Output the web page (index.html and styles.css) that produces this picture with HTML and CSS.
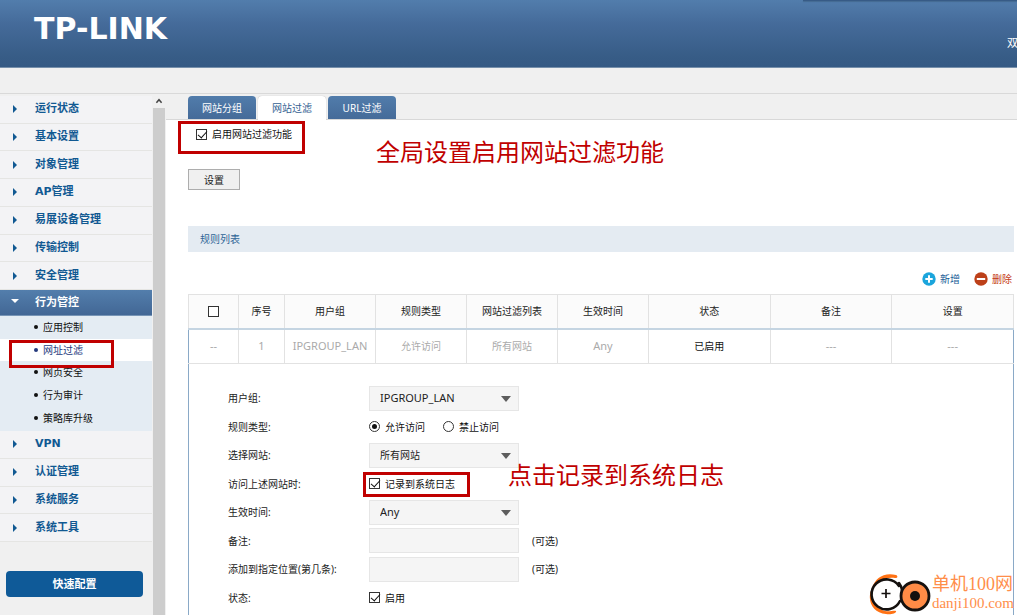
FILE: index.html
```html
<!DOCTYPE html>
<html lang="zh-CN">
<head>
<meta charset="utf-8">
<title>TP-LINK</title>
<link rel="stylesheet" href="styles.css">
</head>
<body>
<header class="header">
  <div class="logo">TP-LINK</div>
  <div class="model">双</div>
  <div class="header-flyout"></div>
</header>
<div class="strip"></div>
<div class="layout">
  <aside class="sidebar">
    <nav class="nav">
      <div class="nav-group nav-group-top">
        <a class="nav-item" href="#">运行状态</a>
        <a class="nav-item" href="#">基本设置</a>
        <a class="nav-item" href="#">对象管理</a>
        <a class="nav-item" href="#">AP管理</a>
        <a class="nav-item" href="#">易展设备管理</a>
        <a class="nav-item" href="#">传输控制</a>
        <a class="nav-item" href="#">安全管理</a>
      </div>
      <a class="nav-item nav-item-open" href="#">行为管控</a>
      <div class="subnav">
        <a class="sub-item" href="#">应用控制</a>
        <a class="sub-item sub-item-current" href="#">网址过滤<span class="mark mark-subnav"></span></a>
        <a class="sub-item" href="#">网页安全</a>
        <a class="sub-item" href="#">行为审计</a>
        <a class="sub-item" href="#">策略库升级</a>
      </div>
      <div class="nav-group nav-group-bottom">
        <a class="nav-item" href="#">VPN</a>
        <a class="nav-item" href="#">认证管理</a>
        <a class="nav-item" href="#">系统服务</a>
        <a class="nav-item" href="#">系统工具</a>
      </div>
    </nav>
    <button class="quick" type="button">快速配置</button>
  </aside>
  <div class="scrollbar">
    <svg class="scroll-up" viewBox="0 0 12 13"><path d="M3.4 8.2 6 5.2l2.6 3" fill="none" stroke="#444" stroke-width="1.5"/></svg>
    <div class="scroll-thumb"></div>
  </div>
  <main class="main">
    <div class="tabs">
      <button class="tab" type="button">网站分组</button>
      <button class="tab tab-active" type="button">网站过滤</button>
      <button class="tab" type="button">URL过滤</button>
    </div>
    <div class="content">
      <div class="enable">
        <label class="option"><input class="check" type="checkbox" checked>启用网站过滤功能</label>
        <span class="mark mark-enable"></span>
        <span class="note note-enable">全局设置启用网站过滤功能</span>
      </div>
      <button class="set-button" type="button">设置</button>
      <h2 class="section-title">规则列表</h2>
      <div class="actions">
        <button class="action action-add" type="button"><svg class="action-icon" viewBox="0 0 14 14"><circle cx="7" cy="7" r="6.7" fill="#1ba5dc"/><path d="M7 3.3v7.4M3.3 7h7.4" stroke="#fff" stroke-width="2"/></svg>新增</button>
        <button class="action action-delete" type="button"><svg class="action-icon" viewBox="0 0 14 14"><circle cx="7" cy="7" r="6.7" fill="#bd4019"/><path d="M2.8 7h8.4" stroke="#fff" stroke-width="2"/></svg>删除</button>
      </div>
      <table class="rules">
        <colgroup><col class="c-check"><col class="c-index"><col class="c-mid"><col class="c-mid"><col class="c-mid"><col class="c-mid"><col class="c-wide"><col class="c-wide"><col class="c-wide"></colgroup>
        <thead>
          <tr><th><input class="check" type="checkbox" aria-label="全选"></th><th>序号</th><th>用户组</th><th>规则类型</th><th>网站过滤列表</th><th>生效时间</th><th>状态</th><th>备注</th><th>设置</th></tr>
        </thead>
        <tbody>
          <tr><td>--</td><td>1</td><td>IPGROUP_LAN</td><td class="cjk">允许访问</td><td class="cjk">所有网站</td><td>Any</td><td class="cjk enabled">已启用</td><td>---</td><td>---</td></tr>
        </tbody>
      </table>
      <form class="editor">
        <div class="field"><label class="label" for="group">用户组:</label><span class="select"><select id="group"><option>IPGROUP_LAN</option></select></span></div>
        <div class="field"><span class="label">规则类型:</span><label class="option"><input class="radio" type="radio" name="type" checked>允许访问</label><label class="option"><input class="radio" type="radio" name="type">禁止访问</label></div>
        <div class="field"><label class="label" for="site">选择网站:</label><span class="select"><select id="site" class="cjk"><option>所有网站</option></select></span></div>
        <div class="field"><span class="label">访问上述网站时:</span><label class="option"><input class="check" type="checkbox" checked>记录到系统日志</label><span class="mark mark-log"></span><span class="note note-log">点击记录到系统日志</span></div>
        <div class="field"><label class="label" for="time">生效时间:</label><span class="select"><select id="time"><option>Any</option></select></span></div>
        <div class="field"><label class="label" for="remark">备注:</label><input class="text" id="remark" type="text"><span class="hint">(可选)</span></div>
        <div class="field"><label class="label" for="order">添加到指定位置(第几条):</label><input class="text" id="order" type="text"><span class="hint">(可选)</span></div>
        <div class="field"><span class="label">状态:</span><label class="option"><input class="check" type="checkbox" checked>启用</label></div>
      </form>
    </div>
  </main>
</div>
<div class="watermark">
  <svg class="watermark-icon" viewBox="0 0 64 44">
    <path d="M4 17C7 7 16 1 28 4c2 1 2 3-1 3C18 6 9 9 5 18c-4 9 1 19 12 22 5 1 9-1 11 0 1 2-5 4-10 3C5 42-2 30 4 17Z" fill="#ff7214"/>
    <path d="M31 15a15 15 0 1 0 1 15" fill="#fff" stroke="#15110f" stroke-width="2.6" stroke-linecap="round"/>
    <path d="M31 12c3 4 4 9 3 15" fill="none" stroke="#15110f" stroke-width="2.6" stroke-linecap="round"/>
    <circle cx="47" cy="25" r="14" fill="#ff8b46" stroke="#15110f" stroke-width="2.8"/>
    <circle cx="47" cy="25" r="5" fill="#15110f"/>
    <path d="M18 18v9M13.500 22.500h9" stroke="#15110f" stroke-width="1.700"/>
  </svg>
  <div class="watermark-text"><div class="watermark-name">单机100网</div><div class="watermark-site">danji100.com</div></div>
</div>
</body>
</html>
```
FILE: styles.css
```css
*, *::before, *::after { box-sizing: border-box; }
body {
  margin: 0;
  height: 100vh;
  display: flex;
  flex-direction: column;
  overflow: hidden;
  position: relative;
  background: #fff;
  color: #222;
  font: 10px/16px "Noto Sans", "Noto Sans CJK SC", sans-serif;
}
button, input, select { font: inherit; color: inherit; margin: 0; }
button { cursor: pointer; }
a { text-decoration: none; }

.header {
  position: relative;
  flex: none;
  height: 68px;
  display: flex;
  justify-content: space-between;
  padding-left: 34px;
  background: linear-gradient(#527dac, #456b9a 35%, #375c86 85%, #355a84);
  border-bottom: 1px solid #7790ab;
  color: #fff;
}
.logo { padding-top: 13px; font: bold 30px/32px "DejaVu Sans", sans-serif; }
.model { width: 10px; padding-top: 35px; overflow: hidden; font-size: 11px; }
.header-flyout {
  position: absolute;
  top: 0;
  right: 0;
  width: 21%;
  height: 1px;
  background: #375b86;
  box-shadow: 0 1px 1px #43688f;
}
.strip { flex: none; height: 26px; background: #f0f0f0; border-bottom: 1px solid #d9d9d9; }

.layout { flex: 1; min-height: 0; display: flex; }
.sidebar { flex: none; width: 153px; padding-top: 2px; background: #f0f0f0; }
.nav { width: 152px; }
.nav-group { display: grid; grid-auto-rows: 1fr; }
.nav-group-top { height: 194px; }
.nav-group-bottom { height: 111px; }
.nav-item {
  display: flex;
  align-items: center;
  padding-left: 13px;
  background: #f3f3f5;
  border-bottom: 1px solid #e5e5e3;
  color: #115992;
  font-family: "DejaVu Sans", "Noto Sans CJK SC", sans-serif;
  font-size: 11px;
  font-weight: bold;
}
.nav-item::before {
  content: "";
  width: 4px;
  margin-right: 18px;
  border: solid transparent;
  border-width: 4px 0 4px 4px;
  border-left-color: #115992;
}
.nav-item-open { height: 26px; background: linear-gradient(#537eac, #426795); border-color: #7795b6; color: #fff; }
.nav-item-open::before {
  width: 8px;
  margin: 0 16px 4px -2px;
  border-width: 4px 4px 0;
  border-color: #fff transparent transparent;
}
.subnav { height: 115px; padding-bottom: 2px; display: grid; grid-auto-rows: 1fr; background: #e4ecf3; }
.sub-item { position: relative; display: flex; align-items: center; padding-left: 34px; color: #111; }
.sub-item::before { content: ""; width: 4px; height: 4px; margin-right: 5px; border-radius: 50%; background: currentColor; }
.sub-item-current { background: #fff; color: #24397d; }
.quick {
  display: block;
  width: 137px;
  height: 26px;
  margin: 29px 0 0 6px;
  padding: 0;
  border: 0;
  border-radius: 4px;
  background: #0f5a98;
  color: #fff;
  font-size: 11px;
  font-weight: bold;
}
.scrollbar { flex: none; width: 13px; display: flex; flex-direction: column; background: #f0f0f0; }
.scroll-up { width: 12px; height: 14px; }
.scroll-thumb { flex: 1; width: 12px; background: #cdcdcd; }

.main { flex: 1; min-width: 0; }
.tabs { height: 26px; display: flex; align-items: flex-end; gap: 2px; padding-left: 22px; background: #f0f0f0; border-bottom: 1px solid #d8d8d8; }
.tab {
  width: 68px;
  height: 23px;
  padding: 0;
  border: 0;
  border-radius: 4px 4px 0 0;
  background: linear-gradient(#517cab, #456b99);
  color: #fff;
}
.tab-active { height: 24px; margin-bottom: -1px; background: #fff; color: #345f92; box-shadow: 0 0 1px #aaa; clip-path: inset(-2px -2px 0); }
.content { padding: 4px 3px 0 22px; }
.enable { position: relative; height: 20px; display: flex; align-items: center; padding-left: 8px; }
.option { display: flex; align-items: center; gap: 5px; color: #111; }
.option + .option { margin-left: 18px; }
.check, .radio { flex: none; appearance: none; position: relative; width: 11px; height: 11px; border: 1px solid #333; background: #fff; }
.check:checked::before {
  content: "";
  position: absolute;
  left: 3px;
  top: -1px;
  width: 5px;
  height: 9px;
  border: solid #111;
  border-width: 0 1px 1px 0;
  transform: rotate(42deg);
}
.radio { border-radius: 50%; }
.radio:checked::before { content: ""; position: absolute; inset: 2px; border-radius: 50%; background: #111; }

.mark { position: absolute; z-index: 2; border: 3px solid #c00000; pointer-events: none; }
.mark-enable { left: -10px; top: -3px; width: 127px; height: 33px; }
.mark-subnav { left: 9px; top: 1px; width: 105px; height: 28px; }
.mark-log { left: 174px; top: 2px; width: 107px; height: 25px; }
.note { position: absolute; z-index: 2; white-space: nowrap; color: #c00000; font-family: "Noto Sans CJK SC", sans-serif; font-size: 24px; line-height: 32px; }
.note-enable { left: 188px; top: 11px; }
.note-log { left: 319px; top: -12px; }

.set-button { display: block; width: 52px; height: 21px; margin-top: 25px; padding: 0; border: 1px solid #adadad; background: #f0f0f0; line-height: 16px; }
.section-title { margin: 36px 0 0; padding: 5px 12px; background: #e4ebf2; color: #2d6496; font-size: 10px; font-weight: normal; line-height: 16px; }
.actions { display: flex; justify-content: flex-end; gap: 14px; padding: 19px 2px 7px; }
.action { display: flex; align-items: center; gap: 4px; padding: 0; border: 0; background: none; }
.action-add { color: #1a5e98; }
.action-delete { color: #c43a15; }
.action-icon { width: 14px; height: 14px; }

.rules { width: 100%; table-layout: fixed; border-collapse: collapse; text-align: center; }
.c-check { width: 50px; }
.c-index { width: 46px; }
.c-mid { width: 91px; }
.rules th, .rules td { height: 35px; padding: 0; border: 1px solid #e2e2e2; vertical-align: middle; }
.rules th { height: 34px; background: #fbfbfb; font-weight: normal; }
.rules thead th { border-bottom: 2px solid #c5d5e2; }
.rules th .check { display: block; margin: 0 auto; }
.rules td { color: #aaa; font-size: 11px; }
.rules .cjk, .editor .cjk { font-size: 10px; }
.rules .enabled { color: #111; }
.rules tbody td:first-child { border-left-color: #8aa9c7; }
.rules tbody td:last-child { border-right-color: #8aa9c7; }

.editor { height: 252px; padding: 20px 0 4px; display: grid; grid-auto-rows: 1fr; border: solid #8aa9c7; border-width: 0 1px; }
.field { position: relative; display: flex; align-items: center; padding-left: 39px; }
.label { flex: none; width: 141px; }
.select { position: relative; width: 150px; }
.select::after { content: ""; position: absolute; right: 8px; top: 10px; width: 10px; border: solid transparent; border-width: 6px 5px 0; border-top-color: #5d5d5d; pointer-events: none; }
.select select, .text { display: block; width: 150px; height: 25px; padding: 0 10px; appearance: none; border: 1px solid #e6e6e6; border-radius: 0; background: #f5f5f5; font-size: 11px; }
.hint { margin-left: 13px; }

.watermark { position: absolute; z-index: 3; right: 3px; bottom: 0; display: flex; align-items: center; }
.watermark-icon { width: 64px; height: 44px; }
.watermark-text { color: #ff8e4a; font-family: "Liberation Serif", "Noto Sans CJK SC", serif; white-space: nowrap; }
.watermark-name { font-size: 18px; line-height: 20px; }
.watermark-site { font-size: 15px; line-height: 18px; }
```
